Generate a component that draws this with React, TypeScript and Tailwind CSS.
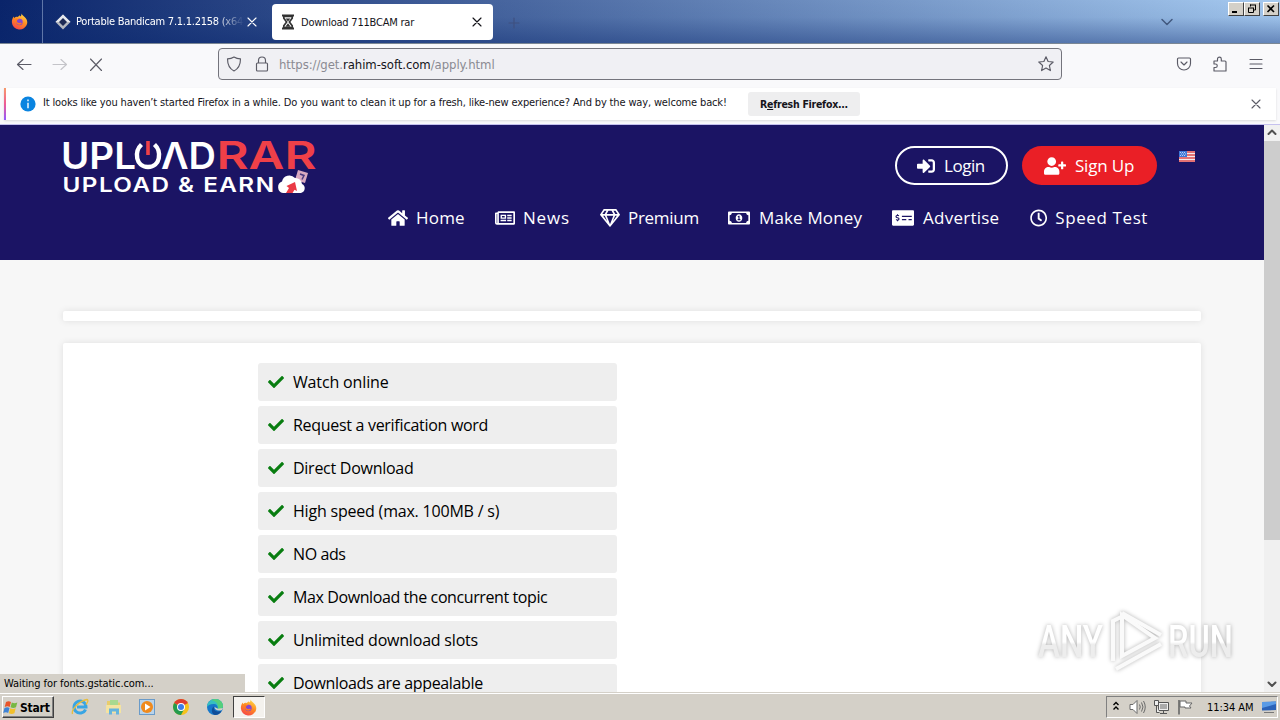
import type { ReactNode } from "react";
import {
  FaHome,
  FaRegNewspaper,
  FaRegGem,
  FaRegMoneyBillAlt,
  FaMoneyCheckAlt,
  FaRegClock,
  FaSignInAlt,
  FaUserPlus,
  FaCheck,
} from "react-icons/fa";

const ui = "font-['DejaVu_Sans_Condensed','DejaVu_Sans',sans-serif] [font-stretch:condensed]";

function Line({ d, className, w = 1.15, size = 16 }: { d: string; className?: string; w?: number; size?: number }) {
  return (
    <svg
      width={size}
      height={size}
      viewBox="0 0 16 16"
      fill="none"
      stroke="currentColor"
      strokeWidth={w}
      strokeLinecap="round"
      strokeLinejoin="round"
      className={"shrink-0 " + (className ?? "")}
    >
      <path d={d} />
    </svg>
  );
}

function FirefoxIcon({ id }: { id: string }) {
  return (
    <svg width="17" height="17" viewBox="0 0 16 16" className="shrink-0">
      <defs>
        <linearGradient id={id} x1="0.8" y1="0" x2="0.3" y2="1">
          <stop offset="0" stopColor="#ffe04a" />
          <stop offset="0.5" stopColor="#ff8a22" />
          <stop offset="1" stopColor="#f5444a" />
        </linearGradient>
      </defs>
      <path
        d="M10 .4c.6 1.700 1.800 2.300 2.800 3.300C15 5.700 15.700 8 15.100 10.300A7.300 7.300 0 0 1 .8 8.800c0-2.500.7-4 1.700-5.400.1.600.3 1 .6 1.400C4 3.800 5 3.500 5.800 3.700c1-.2 1.800-.5 2.200-1.500.4.300.7.700.9 1.100C9.600 2.500 10 1.500 10 .4z"
        fill={`url(#${id})`}
      />
      <circle cx="8" cy="8.500" r="3" fill="#8546cf" />
      <path d="M4.200 5.800c1-.6 2.200-.3 3.300.4-1.200 0-1.500.7-2 1.200 0 1.500 1 2.200 2.400 2 1.200-.1 2.200-.5 2.300.5-1.800 2.300-6 1-6-4.100z" fill="#ff7a1f" />
    </svg>
  );
}

function Tab1Icon() {
  return (
    <svg width="16" height="16" viewBox="0 0 16 16" className="shrink-0">
      <path d="M8 .5 15.500 8 8 15.500.500 8z" fill="#b4b8c0" />
      <path d="M8 .5 15.500 8H.500z" fill="#e6e9ee" />
      <path d="M8 4 12 8 8 12 4 8z" fill="#1d2a55" />
    </svg>
  );
}

function Hourglass() {
  return (
    <svg width="14" height="16" viewBox="0 0 14 16" className="shrink-0">
      <path d="M1 1.600h12M1 14.400h12" stroke="#333" strokeWidth="2" />
      <path d="M2.800 2.500v1.800L5.600 8l-2.800 3.700v1.800h8.400v-1.800L8.400 8l2.800-3.700V2.500z" fill="#fff" stroke="#333" strokeWidth="1.700" />
      <path d="M4.600 4.500h4.800L7 7.600zM7 9.300l2.600 3.400H4.400z" fill="#333" />
    </svg>
  );
}

function WinButton({ children }: { children: ReactNode }) {
  return (
    <div className="h-[14px] w-4 border border-t-white border-l-white border-r-[#404040] border-b-[#404040] bg-[#d4d0c8]">
      <svg width="14" height="12" viewBox="0 0 14 12" fill="none" stroke="#000">
        {children}
      </svg>
    </div>
  );
}

function TitleBar() {
  return (
    <div className="h-[44px] shrink-0 bg-[linear-gradient(to_right,#0a246a,#a6caf0)]">
      <div className="flex h-full border-b border-[#7b8794] bg-[linear-gradient(to_bottom,rgba(10,36,106,0)_0%,rgba(10,50,120,0.06)_40%,rgba(10,40,110,0.42)_100%)]">
        <div className="flex w-[43px] items-center border-r border-[#5f76a8] pl-[11px]">
          <FirefoxIcon id="fx-title" />
        </div>
        <div className="flex w-[229px] items-center pl-[12px] text-white">
          <Tab1Icon />
          <div className="relative top-px ml-[5px] w-[168px] overflow-hidden text-[11px] whitespace-nowrap tracking-[-0.250px] [mask-image:linear-gradient(to_right,#000_140px,transparent_168px)]">
            Portable Bandicam 7.1.1.2158 (x64
          </div>
          <Line d="M4 4l8 8M12 4l-8 8" />
        </div>
        <div className="mt-1 flex h-9 w-[221px] items-center rounded-[4px] bg-white pl-[9px] text-[#15141a]">
          <Hourglass />
          <div className="relative top-px ml-[6px] w-[168px] text-[11px] tracking-[-0.220px] whitespace-nowrap">Download 711BCAM rar</div>
          <Line d="M4 4l8 8M12 4l-8 8" />
        </div>
        <Line d="M8 3v10M3 8h10" className="mt-[15px] ml-[13px] text-[#3f5080]" />
        <div className="flex-1" />
        <Line d="M3 5.500l5 5 5-5" className="mt-[14px] mr-[53px] text-[#42597f]" w={1.500} />
        <div className="mt-[2px] flex pr-[1px]">
          <WinButton>
            <path d="M3 9h5" strokeWidth="2" />
          </WinButton>
          <WinButton>
            <path d="M5 2h6M5.500 1.500v2M10.500 2v5h-2M3 5h6M3.500 5v4.500h5V5" />
          </WinButton>
          <div className="w-[3px]" />
          <WinButton>
            <path d="M3.500 2.500l6.500 6.500M10 2.500L3.500 9" strokeWidth="1.600" />
          </WinButton>
        </div>
      </div>
    </div>
  );
}

function Toolbar() {
  return (
    <div className="flex h-[44px] shrink-0 items-start bg-[#f9f9fb] pt-1 text-[#5b5b66]">
      <div className="flex w-[218px] items-center pt-[9px] pl-4">
        <Line d="M15 7.500H1.500M7 2.500L1.500 7.500 7 12.500" />
        <Line d="M1 7.500h13.500M9 2.500l5.500 5L9 12.500" className="ml-5 text-[#c4c4c9]" />
        <Line d="M2.500 2l11 11.500M13.500 2l-11 11.500" className="ml-5" />
      </div>
      <div className="flex h-8 w-[844px] items-center rounded-[4px] border border-[#74747c] bg-[#f0f0f4] px-[7px]">
        <Line d="M8 1c2 1.300 4 1.800 6.500 1.800 0 5.500-1.500 9.700-6.500 12.200-5-2.500-6.500-6.700-6.500-12.200C4 2.800 6 2.300 8 1z" />
        <Line d="M3.500 7h9a1 1 0 0 1 1 1v6a1 1 0 0 1-1 1h-9a1 1 0 0 1-1-1V8a1 1 0 0 1 1-1zM4.500 7V4.500a3.500 3.500 0 0 1 7 0V7" className="ml-3" />
        <div className="relative top-px ml-[9px] text-[13px] tracking-[-0.070px] whitespace-nowrap text-[#8a8a92]">
          https://get.<span className="text-[#15141a]">rahim-soft.com</span>/apply.html
        </div>
        <Line
          d="M8 .8l2.100 4.700 5.100.5-3.800 3.500 1 5.100L8 12l-4.400 2.600 1-5.100L.8 6l5.100-.5z"
          className="ml-auto"
        />
      </div>
      <div className="ml-auto flex items-center gap-5 pt-2 pr-4">
        <Line d="M2.500 2h11a1 1 0 0 1 1 1v4.500a6.500 6.500 0 0 1-13 0V3a1 1 0 0 1 1-1zM5 6l3 3 3-3" />
        <Line d="M2 5h3.500V3a1.900 1.900 0 0 1 3.800 0v2H13a1 1 0 0 1 1 1v9H2v-3.500h1.500a1.700 1.700 0 0 0 0-3.500H2z" />
        <Line d="M2 3.500h12M2 8h12M2 12.500h12" />
      </div>
    </div>
  );
}

function Notice() {
  return (
    <div className="h-[37px] shrink-0 border-b border-[#c5c1ee] bg-[#f9f9fb] px-1">
      <div className="flex h-8 w-[1272px] bg-white shadow-[0_1px_2px_rgba(0,0,0,0.12)]">
        <div className="w-[2px] bg-[linear-gradient(#f79a6b,#ee5b93,#9059ff)]" />
        <svg width="16" height="16" viewBox="0 0 16 16" className="mt-2 ml-[14px] shrink-0">
          <circle cx="8" cy="8" r="7.600" fill="#0a84e0" />
          <path d="M8 3.600v1.600M8 6.800v5.400" stroke="#fff" strokeWidth="1.400" />
        </svg>
        <div className="mt-[7px] ml-[7px] w-[705px] text-[11px] leading-4 tracking-[-0.150px] whitespace-nowrap text-[#15141a]">
          It looks like you haven’t started Firefox in a while. Do you want to clean it up for a fresh, like-new experience? And by the way, welcome back!
        </div>
        <div className="mt-1 h-6 w-[112px] rounded-[3px] bg-[#eeeeef] text-center text-[10.500px] leading-[25px] font-bold tracking-[-0.270px] whitespace-nowrap text-[#15141a]">
          R<span className="underline">e</span>fresh Firefox...
        </div>
        <Line d="M4 4l8 8M12 4l-8 8" className="mt-2 mr-[12px] ml-auto text-[#5b5b66]" w={1.100} />
      </div>
    </div>
  );
}

function Logo() {
  return (
    <svg width="264" height="66" viewBox="-3 -4 264 66" className="shrink-0">
      <g fontFamily="Inter, sans-serif" fill="#fff">
        <text x="-1" y="31" fontSize="37" fontWeight="600" textLength="75" lengthAdjust="spacingAndGlyphs">
          UPL
        </text>
        <text x="99" y="31" fontSize="37" fontWeight="600" textLength="55" lengthAdjust="spacingAndGlyphs">
          ΛD
        </text>
        <text x="154.500" y="31" fontSize="38" fontWeight="600" fill="#ef4048" textLength="100" lengthAdjust="spacingAndGlyphs">
          RAR
        </text>
        <text x="0.500" y="54" fontSize="20" fontWeight="600" letterSpacing="1.200" textLength="213" lengthAdjust="spacingAndGlyphs">
          UPLOAD &amp; EARN
        </text>
      </g>
      <path d="M79.500 6.500c-7.500 7-6 22.500 6.500 22.500s14-15.500 6.500-22.500" fill="none" stroke="#fff" strokeWidth="4.400" />
      <path d="M86 3v14" stroke="#ef4048" strokeWidth="3.600" />
      <path d="M236 32l10 3-3 10-10-3z" fill="#d9a9c0" />
      <path d="M238 36l4 1.500-2 4" stroke="#4a3a80" strokeWidth="1.500" fill="none" />
      <path d="M221 55a6 6 0 0 1-1-11.500 7.500 7.500 0 0 1 13-3.500 6.500 6.500 0 0 1 7 6 4.800 4.800 0 0 1-1 9z" fill="#fff" />
      <path d="M224 55l3-5-2.500-2 8.500-4 2 9-2.500-1.200-2 3.200z" fill="#ea3a45" />
    </svg>
  );
}

const nav: { icon: ReactNode; label: string; box: string; text: string }[] = [
  { icon: <FaHome size={20} />, label: "Home", box: "w-[107px]", text: "ml-2 tracking-[0.200px]" },
  { icon: <FaRegNewspaper size={20} />, label: "News", box: "w-[105px]", text: "ml-2 tracking-[0.800px]" },
  { icon: <FaRegGem size={20} />, label: "Premium", box: "w-[128px]", text: "ml-2 tracking-[-0.300px]" },
  { icon: <FaRegMoneyBillAlt size={22} />, label: "Make Money", box: "w-[164px]", text: "ml-[9px] tracking-[0.150px]" },
  { icon: <FaMoneyCheckAlt size={22} />, label: "Advertise", box: "w-[138px]", text: "ml-[9px] tracking-[0.250px]" },
  { icon: <FaRegClock size={18} />, label: "Speed Test", box: "w-[118px]", text: "ml-2 tracking-[0.600px]" },
];

function Flag() {
  return (
    <svg width="16" height="11" viewBox="0 0 16 11" className="mt-[26px] ml-[22px]">
      <rect width="16" height="11" fill="#f6e9ea" />
      <path d="M0 1h16M0 4h16M0 7h16M0 10h16" stroke="#dd4b4e" strokeWidth="1.500" />
      <rect width="8" height="6" fill="#3c77d8" />
      <path d="M1 1.500h6M1 4.500h6M2 3h5" stroke="#d8e6fa" strokeWidth="0.800" strokeDasharray="1 1" />
    </svg>
  );
}

function SiteHeader() {
  return (
    <header className="h-[135px] bg-[#1b1464] font-['Open_Sans','Noto_Sans',sans-serif] text-[17px] text-white">
      <div className="flex h-[79px]">
        <div className="w-[895px] pt-[9px] pl-[59px]">
          <Logo />
        </div>
        <div className="mt-[21px] flex h-[39px] w-[113px] items-center rounded-full border-2 border-white pl-5">
          <FaSignInAlt size={18} />
          <span className="ml-[9px] tracking-[-0.450px]">Login</span>
        </div>
        <div className="mt-[21px] ml-[14px] flex h-[39px] w-[135px] items-center rounded-full bg-[#ea1f26] pl-[22px]">
          <FaUserPlus size={22} />
          <span className="ml-[9px] tracking-[-0.200px] whitespace-nowrap">Sign Up</span>
        </div>
        <Flag />
      </div>
      <nav className="flex h-[27px] items-center pl-[388px]">
        {nav.map((n) => (
          <div key={n.label} className={"flex items-center " + n.box}>
            {n.icon}
            <span className={"whitespace-nowrap " + n.text}>{n.label}</span>
          </div>
        ))}
      </nav>
    </header>
  );
}

const features = [
  { label: "Watch online", fit: "tracking-[-0.150px]" },
  { label: "Request a verification word", fit: "tracking-[-0.300px]" },
  { label: "Direct Download", fit: "tracking-[-0.270px]" },
  { label: "High speed (max. 100MB / s)", fit: "tracking-[-0.200px]" },
  { label: "NO ads", fit: "tracking-[-0.400px]" },
  { label: "Max Download the concurrent topic", fit: "tracking-[-0.400px]" },
  { label: "Unlimited download slots", fit: "tracking-[-0.200px]" },
  { label: "Downloads are appealable", fit: "tracking-[-0.350px]" },
];

function ScrollBar() {
  return (
    <div className="flex w-4 flex-col items-center bg-[#f0f0f0] text-[#505050]">
      <Line d="M4.500 9L8 5.500 11.500 9" w={2} />
      <div className="h-[399px] w-full bg-[#cdcdcd]" />
      <Line d="M4.500 6.500L8 10l3.500-3.500" w={2} className="mt-auto" />
    </div>
  );
}

function Watermark() {
  return (
    <svg width="210" height="76" viewBox="0 0 210 76" className="absolute top-[478px] left-[1030px] [filter:drop-shadow(0_0_2px_rgba(0,0,0,0.3))]">
      <defs>
        <linearGradient id="mark" gradientUnits="userSpaceOnUse" x1="0" y1="18" x2="0" y2="56">
          <stop offset="0.55" stopColor="#fff" />
          <stop offset="0.62" stopColor="#ededed" />
        </linearGradient>
      </defs>
      <g fontFamily="Roboto, sans-serif" fontSize="45" fontWeight="500" fill="url(#mark)">
        <text x="8" y="54" textLength="65" lengthAdjust="spacingAndGlyphs">
          ANY
        </text>
        <text x="138" y="54" textLength="65" lengthAdjust="spacingAndGlyphs">
          RUN
        </text>
      </g>
      <g fill="none" stroke="#fafafa" strokeWidth="4">
        <path d="M83 58V18l8-4M92 12v41l33-18z" />
        <path d="M92 10l39 22M86 66l45-25" />
      </g>
    </svg>
  );
}

function Page() {
  return (
    <div className="relative flex h-[567px] shrink-0 overflow-hidden">
      <div className="h-full w-[1264px] overflow-hidden bg-[#f7f7f7]">
        <SiteHeader />
        <main className="px-[63px] pt-[51px] font-['Open_Sans','Noto_Sans',sans-serif]">
          <div className="h-[10px] w-[1138px] rounded-[2px] bg-white shadow-[0_0_7px_rgba(0,0,0,0.10)]" />
          <div className="mt-[22px] h-[400px] w-[1138px] rounded-[2px] bg-white pt-5 pl-[195px] shadow-[0_0_7px_rgba(0,0,0,0.10)]">
            <ul className="flex w-[359px] flex-col gap-[5px] text-[16px] text-black">
              {features.map((f) => (
                <li key={f.label} className="flex h-[38px] shrink-0 items-center rounded-[3px] bg-[#eee] pb-px pl-[10px]">
                  <FaCheck size={16} className="text-[#087d10]" />
                  <span className={"ml-[9px] whitespace-nowrap " + f.fit}>{f.label}</span>
                </li>
              ))}
            </ul>
          </div>
        </main>
      </div>
      <ScrollBar />
      <Watermark />
      <div className={"absolute bottom-0 left-0 h-[18px] w-[245px] bg-[#d4d0c8] pl-1 text-[11px] leading-5 tracking-[-0.080px] text-black " + ui}>
        Waiting for fonts.gstatic.com...
      </div>
    </div>
  );
}

function IeIcon() {
  return (
    <svg width="18" height="18" viewBox="0 0 18 18">
      <path d="M14.500 11.500A6 6 0 1 1 15 9H6" fill="none" stroke="#38a5e4" strokeWidth="3" />
      <path d="M1.500 16C0 12 8 3 16 1.500c2 .5 0 4-1 5" fill="none" stroke="#e8bd3c" strokeWidth="1.300" />
    </svg>
  );
}

function ExplorerIcon() {
  return (
    <svg width="18" height="18" viewBox="0 0 18 18">
      <path d="M2 3h5l1 1.500h7V15H2z" fill="#e8cd6c" />
      <path d="M5 2h8v6H5z" fill="#a8d98f" />
      <path d="M1 7h15v8H1z" fill="#f4e3a0" />
      <path d="M4 16.500v-6h10v6h-3v-3H7v3z" fill="#65b4dd" />
    </svg>
  );
}

function PlayerIcon() {
  return (
    <svg width="18" height="18" viewBox="0 0 18 18">
      <rect x="1.500" y="1.500" width="15" height="15" fill="#b9d3ea" stroke="#6a9bc9" />
      <circle cx="9" cy="9" r="6" fill="#f08a1d" />
      <path d="M7 5.500v7L12.500 9z" fill="#fff" />
    </svg>
  );
}

function ChromeIcon() {
  return (
    <svg width="18" height="18" viewBox="0 0 18 18">
      <circle cx="9" cy="9" r="8" fill="#f6c21c" />
      <path d="M9 9L2.100 5A8 8 0 0 1 15.900 5z" fill="#de3d31" />
      <path d="M2.100 5A8 8 0 0 0 9 17l3.200-6L9 9z" fill="#259b4e" />
      <circle cx="9" cy="9" r="4" fill="#fff" />
      <circle cx="9" cy="9" r="3" fill="#3d7de8" />
    </svg>
  );
}

function EdgeIcon() {
  return (
    <svg width="18" height="18" viewBox="0 0 18 18">
      <circle cx="9" cy="9" r="8" fill="#1778ca" />
      <path d="M1 9C1 4 5 1 9 1c5 0 8 3.500 8 7 0 3-3 4-5.500 3 1-3-1-5-4-5C4 6 1.500 7.500 1 9z" fill="#36bfc0" />
      <path d="M9 1c5 0 8 3.500 8 7 0 2.500-2.500 3.500-5 3.200C12 6 12 4 5 2z" fill="#55cf7c" />
      <path d="M8 8.500c-1 4 3 6 7.500 4.500A8 8 0 0 1 9 17c-4-1-4-7-1-8.500z" fill="#0f4d99" />
      <path d="M8.500 9c0 3 3.500 4.500 7.500 3l1-2-5 .8z" fill="#d4d0c8" />
    </svg>
  );
}

function WindowsFlag() {
  return (
    <svg width="16" height="15" viewBox="0 0 16 15" className="shrink-0">
      <path d="M3 2c2-1.200 3.500-1 5 0L6.700 7c-1.500-1-3-1-5 0z" fill="#e8552b" />
      <path d="M8.800 2.500c2 1 3.500 1 5.500 0L13 7.300c-2 1-3.500 1-5.500 0z" fill="#77b843" />
      <path d="M1.500 8c2-1 3.500-1 5 0l-1.300 5c-1.500-1-3-1-5 0z" fill="#3e83d6" />
      <path d="M7.200 8.300c2 1 3.500 1 5.500 0l-1.300 5c-2 1-3.500 1-5.500 0z" fill="#f2c02c" />
    </svg>
  );
}

function Taskbar() {
  return (
    <div className="flex h-7 shrink-0 border-t border-[#d4d0c8] bg-[#d4d0c8] text-black">
      <div className="flex w-full border-t border-white pt-[2px]">
        <div className="ml-[2px] flex h-[22px] w-[52px] items-center border border-t-white border-r-[#404040] border-b-[#404040] border-l-white text-[12px] font-bold shadow-[inset_-1px_-1px_0_#808080]">
          <WindowsFlag />
          <span className="relative top-px ml-[1px] tracking-[-0.200px]">Start</span>
        </div>
        <div className="mt-[2px] ml-[17px] flex gap-[15.700px]">
          <IeIcon />
          <ExplorerIcon />
          <PlayerIcon />
          <ChromeIcon />
          <EdgeIcon />
        </div>
        <div className="ml-[9px] flex h-[22px] w-8 items-center justify-center border border-t-[#404040] border-r-white border-b-white border-l-[#404040] bg-[#f4f2ee]">
          <FirefoxIcon id="fx-task" />
        </div>
        <div className="mr-[2px] ml-auto flex h-[22px] w-[172px] items-center border border-t-[#808080] border-r-white border-b-white border-l-[#808080] pl-[5px]">
          <svg width="8" height="12" viewBox="0 0 8 12" fill="none" stroke="#000" strokeWidth="1.400">
            <path d="M1.500 4L4 1.500 6.500 4M1.500 8.500L4 6l2.500 2.500" />
          </svg>
          <svg width="17" height="16" viewBox="0 0 17 16" className="ml-[9px]" fill="#fff" stroke="#6b6b6b">
            <path d="M1 5.500h3l4-4v13l-4-4H1z" />
            <path d="M10.500 5.500q1.500 2.500 0 5M12.500 3.500q3 4.500 0 9M14.500 2q3.500 6 0 12" fill="none" />
          </svg>
          <svg width="17" height="16" viewBox="0 0 17 16" className="ml-[7px]" fill="#eee" stroke="#555">
            <path d="M5.500 3.500h10v8h-10zM7 14.500h7M10.500 12v2" />
            <path d="M7 5h7v5H7z" fill="#aaa" stroke="none" />
            <path d="M1.500 1.500h4v5h-4zM3.500 6.500v7h3" />
          </svg>
          <svg width="17" height="16" viewBox="0 0 17 16" className="ml-[7px]" fill="#fff" stroke="#666">
            <path d="M2 1v14.500" strokeWidth="1.600" />
            <path d="M3 2h6v2h6l-2.500 3L14 9H8V8H3z" />
          </svg>
          <span className="relative top-px ml-[13px] w-[48px] text-[11px] tracking-[-0.050px] whitespace-nowrap">11:34 AM</span>
          <svg width="16" height="14" viewBox="0 0 16 14" className="ml-[6px] shrink-0">
            <path d="M1 2l14-.500V10l-14 .500z" fill="#2b62b8" />
            <path d="M1 2l14-.500V4L1 8z" fill="#5a9be6" />
            <path d="M3 12.500h10" stroke="#777" />
          </svg>
        </div>
      </div>
    </div>
  );
}

export default function App() {
  return (
    <div className={"flex h-[720px] w-[1280px] flex-col overflow-hidden bg-white " + ui}>
      <TitleBar />
      <Toolbar />
      <Notice />
      <div className="[font-stretch:normal]">
        <Page />
      </div>
      <Taskbar />
    </div>
  );
}
